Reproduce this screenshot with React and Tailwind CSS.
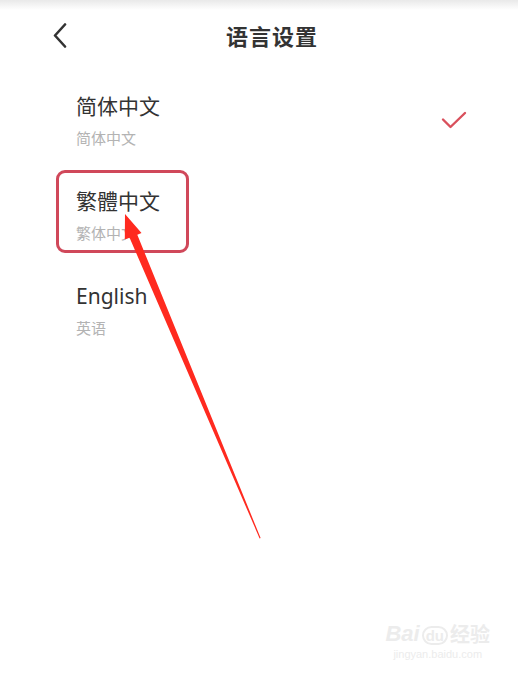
import React from "react";

const languages = [
  { name: "简体中文", sub: "简体中文", checked: true },
  { name: "繁體中文", sub: "繁体中文" },
  { name: "English", sub: "英语" },
];

const App = () => {
  return (
    <div
      className="relative w-[518px] h-[675px] overflow-hidden bg-white"
      style={{ fontFamily: '"Noto Sans", "Noto Sans CJK SC", sans-serif' }}
    >
      {/* status bar shadow */}
      <div className="h-[10px] bg-gradient-to-b from-[#e9e9e9] to-white"></div>

      {/* Header */}
      <div className="flex items-center h-[55px] -mt-[2px]">
        <div className="pl-[52px] w-[226px]">
          <svg width="18" height="26" viewBox="0 0 18 26" fill="none">
            <path d="M13 1.5 L3 12.5 L13 23.5" stroke="#333" strokeWidth="2.6" strokeLinecap="round" strokeLinejoin="round" />
          </svg>
        </div>
        <h1 className="text-[22px] leading-[28px] font-bold text-[#333] tracking-[1px]">语言设置</h1>
      </div>

      {/* Languages */}
      <div className="mt-[17px]">
        {languages.map((lang) => (
          <div key={lang.name} className="flex items-start h-[95px] pl-[76px] pr-[50px] pt-[12px]">
            <div className="flex-1">
              <div className="text-[21px] leading-[28px] text-[#333]">{lang.name}</div>
              <div className="mt-[8px] text-[15px] leading-[20px] text-[#b3b3b3]">{lang.sub}</div>
            </div>
            {lang.checked && (
              <svg className="mt-[19px]" width="28" height="22" viewBox="0 0 28 22" fill="none">
                <path d="M3 8.5 L10.5 16 L25 2" stroke="#d9505c" strokeWidth="2.4" strokeLinecap="round" strokeLinejoin="round" />
              </svg>
            )}
          </div>
        ))}
      </div>

      {/* annotation: highlight box */}
      <div className="absolute left-[56px] top-[170px] w-[133px] h-[83px] border-[3px] border-[#d0485a] rounded-[9px]"></div>

      {/* annotation: arrow */}
      <svg className="absolute left-0 top-0" width="518" height="675" viewBox="0 0 518 675">
        <polygon
          points="125,214 141.5,233 137.3,234.8 260.6,538 259.6,538.4 129.6,237.8 124.8,239.6"
          fill="#ff2a1f"
        />
      </svg>

      {/* watermark */}
      <div className="absolute right-[28px] bottom-[14px] flex flex-col items-center text-[#ececec]">
        <div className="flex items-end leading-none">
          <span className="text-[22px] font-bold italic" style={{ fontFamily: '"Liberation Sans", sans-serif' }}>Bai</span>
          <span className="text-[15px] font-bold mx-[2px] rounded-full border-2 border-[#ececec] px-[2px]" style={{ fontFamily: '"Liberation Sans", sans-serif' }}>du</span>
          <span className="text-[20px] font-bold">经验</span>
        </div>
        <div className="text-[11px] leading-[14px] mt-[2px]" style={{ fontFamily: '"Liberation Sans", sans-serif' }}>jingyan.baidu.com</div>
      </div>
    </div>
  );
};

export default App;
